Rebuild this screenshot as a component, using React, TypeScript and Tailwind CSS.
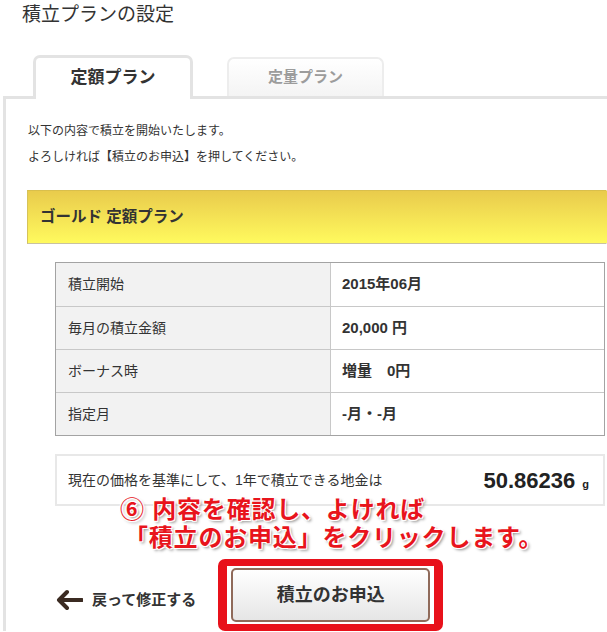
const rows = [
  { label: "積立開始", value: "2015年06月" },
  { label: "毎月の積立金額", value: "20,000 円" },
  { label: "ボーナス時", value: "増量　0円" },
  { label: "指定月", value: "-月・-月" },
];

function BackArrow() {
  return (
    <svg width="28" height="22" viewBox="0 0 28 22" fill="none">
      <path
        d="M27 11H5M12 3L4 11L12 19"
        stroke="#3b2b22"
        strokeWidth="4"
        strokeLinecap="round"
        strokeLinejoin="round"
      />
    </svg>
  );
}

export default function App() {
  return (
    <div className="relative h-[632px] w-[607px] overflow-hidden bg-white font-['Liberation_Sans','Noto_Sans_CJK_JP',sans-serif] text-[#333]">
      {/* Page title */}
      <h1 className="h-[55px] pl-[22px] pt-[4px] text-[19px] leading-[22px]">
        積立プランの設定
      </h1>

      {/* Tabs */}
      <div className="flex h-[41px] items-start pl-[33px]">
        <div className="relative z-10 flex h-[44px] w-[160px] items-center justify-center rounded-t-[7px] border-[3px] border-b-0 border-[#e3e3e3] bg-white pb-[1px] text-[17px] font-bold text-[#333]">
          定額プラン
        </div>
        <div className="ml-[34px] mt-[2px] flex h-[39px] w-[157px] items-center justify-center rounded-t-[7px] border-2 border-b-0 border-[#ededed] bg-gradient-to-b from-white to-[#f4f4f4] text-[15px] font-bold text-[#9c9c9c]">
          定量プラン
        </div>
      </div>

      {/* Panel */}
      <div className="ml-[3px] border-l-[3px] border-t-[3px] border-[#e3e3e3] pt-[19px]">
        <div className="pl-[22px] text-[12px] leading-[26px] text-[#333]">
          <p>以下の内容で積立を開始いたします。</p>
          <p>よろしければ【積立のお申込】を押してください。</p>
        </div>

        <div className="ml-[21px] mt-[20px] flex h-[54px] items-center border border-b-[#c9c2a0] border-l-[#d6c35a] border-t-[#d9bf4c] border-r-transparent bg-gradient-to-b from-[#e9cb4c] to-[#fffa5e] pl-[12px] text-[15.5px] font-bold text-[#333]">
          ゴールド 定額プラン
        </div>

        {/* Details table */}
        <div className="ml-[49px] mt-[18px] w-[550px] border border-[#a3a3a3]">
          {rows.map((r, i) => (
            <div
              key={r.label}
              className={`flex h-[43px] ${i > 0 ? "border-t border-[#c8c8c8]" : ""}`}
            >
              <div className="flex w-[275px] items-center border-r border-[#c8c8c8] bg-[#f2f2f2] pl-[12px] text-[14px]">
                {r.label}
              </div>
              <div className="flex flex-1 items-center pl-[11px] text-[15px] font-bold">
                {r.value}
              </div>
            </div>
          ))}
        </div>

        {/* Summary */}
        <div className="ml-[49px] mt-[18px] flex h-[52px] w-[550px] items-center justify-between border-2 border-[#e8e8e8] pl-[11px] pr-[14px]">
          <span className="text-[14px]">
            現在の価格を基準にして、1年で積立できる地金は
          </span>
          <span className="flex items-baseline gap-[7px] font-bold text-[#222]">
            <span className="text-[22px]">50.86236</span>
            <span className="text-[11px]">g</span>
          </span>
        </div>

        {/* Actions */}
        <div className="ml-[49px] mt-[53px] flex items-start">
          <a className="mt-[30px] flex items-center gap-[9px] text-[15px] font-bold text-[#333]">
            <BackArrow />
            戻って修正する
          </a>
          <div className="ml-[22px] rounded-[7px] border-x-[9px] border-y-[7px] border-[#e8111b] px-[4px] py-[2px]">
            <button className="flex h-[54px] w-[199px] items-center justify-center rounded-[5px] border-2 border-[#8f6a5a] bg-gradient-to-b from-white to-[#e6e6e6] text-[18px] font-bold text-[#333]">
              積立のお申込
            </button>
          </div>
        </div>
      </div>

      {/* Annotation overlay */}
      <div className="absolute left-[120px] top-[496px] text-[24px] font-bold leading-[28px] tracking-[0.8px] text-[#e8141c] [text-shadow:-1px_-1px_0_#fff,1px_-1px_0_#fff,-1px_1px_0_#fff,1px_1px_0_#fff,2px_2px_3px_rgba(0,0,0,0.45)]">
        <p>⑥ 内容を確認し、よければ</p>
        <p className="pl-[4px]">「積立のお申込」をクリックします。</p>
      </div>
    </div>
  );
}
